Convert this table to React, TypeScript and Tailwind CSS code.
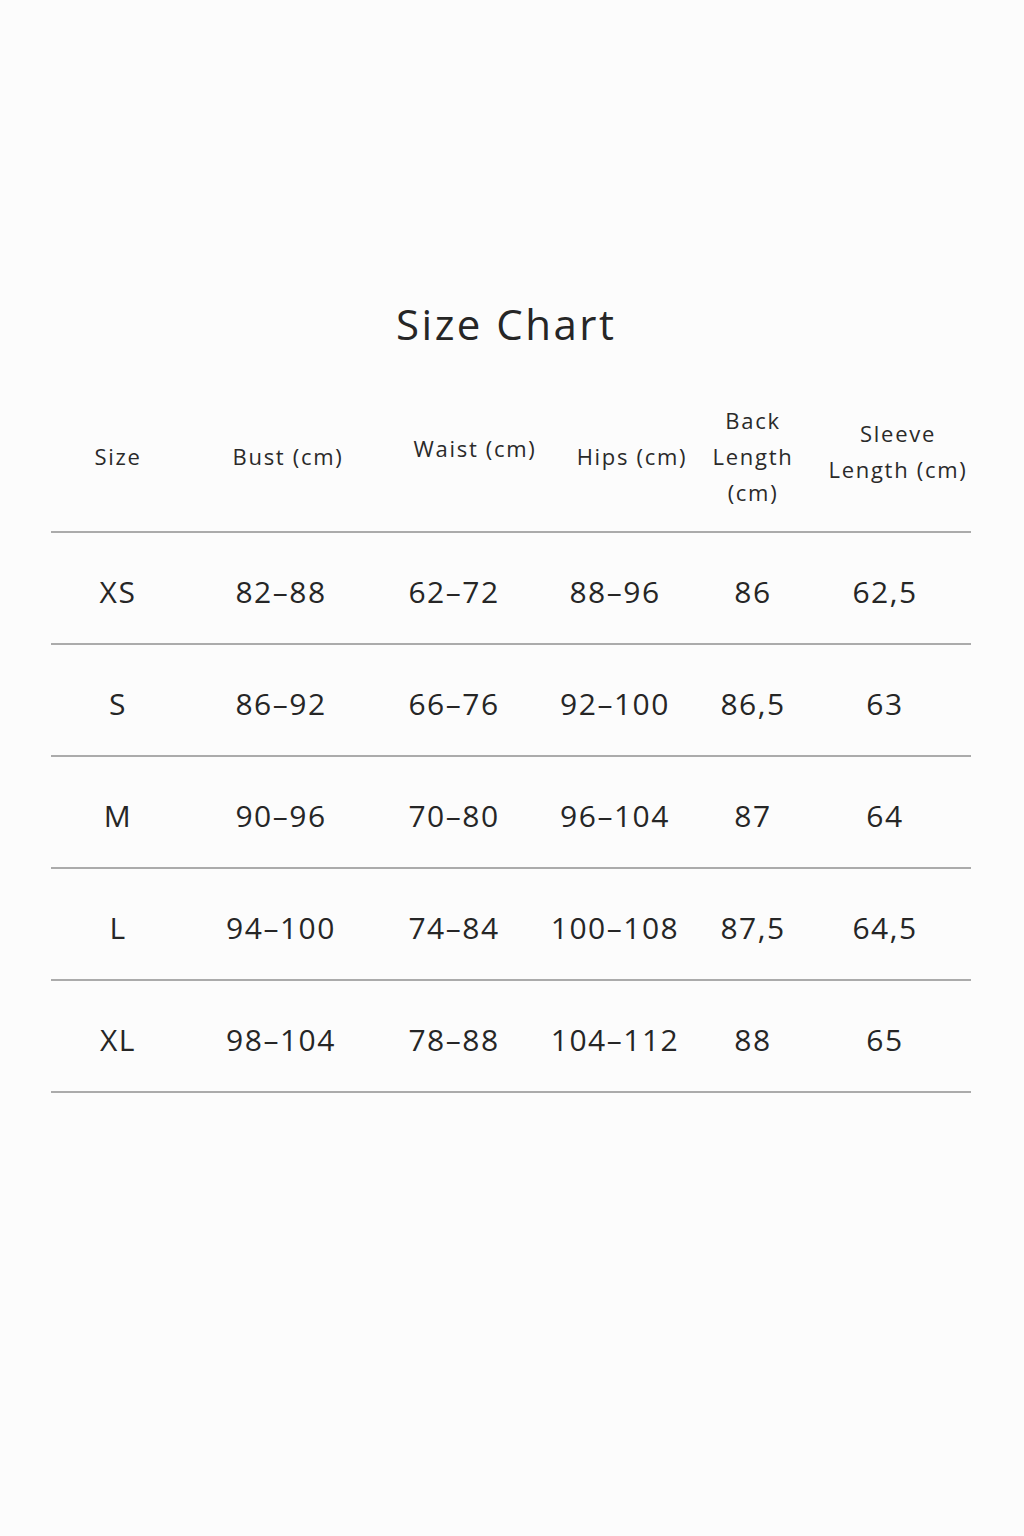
import React from "react";

const cols = ["w-[134px]", "w-[192px]", "w-[154px]", "w-[168px]", "w-[108px]", "w-[164px]"];

const rows = [
  ["XS", "82–88", "62–72", "88–96", "86", "62,5"],
  ["S", "86–92", "66–76", "92–100", "86,5", "63"],
  ["M", "90–96", "70–80", "96–104", "87", "64"],
  ["L", "94–100", "74–84", "100–108", "87,5", "64,5"],
  ["XL", "98–104", "78–88", "104–112", "88", "65"],
];

export default function App() {
  return (
    <div
      className="w-[1024px] h-[1536px] bg-[#fcfcfc] text-[#262626] flex flex-col"
      style={{ fontFamily: "'Open Sans', 'Noto Sans', sans-serif" }}
    >
      <div className="pt-[296px] pl-[396px]">
        <h1 className="text-[42px] leading-[56px] font-normal tracking-[2.5px]">Size Chart</h1>
      </div>
      <div className="ml-[51px] w-[920px] mt-[48px]">
        <div className="flex h-[131px] text-[22px] leading-[36px] text-[#2a2a2a] font-normal tracking-[1.7px]">
          <div className={`${cols[0]} flex items-center justify-center pb-[20px]`}>Size</div>
          <div className={`${cols[1]} flex items-center justify-center pb-[20px] pl-[14px]`}>Bust (cm)</div>
          <div className={`${cols[2]} flex items-center justify-center pb-[36px] pl-[42px] whitespace-nowrap`}>Waist (cm)</div>
          <div className={`${cols[3]} flex items-center justify-center pb-[20px] pl-[34px] whitespace-nowrap`}>Hips (cm)</div>
          <div className={`${cols[4]} flex items-center justify-center text-center pb-[20px]`}>
            <span>Back<br />Length<br />(cm)</span>
          </div>
          <div className={`${cols[5]} flex items-center justify-center text-center pb-[29px] pl-[18px] whitespace-nowrap`}>
            <span>Sleeve<br />Length (cm)</span>
          </div>
        </div>
        {rows.map((r, i) => (
          <div key={i} className="flex h-[112px] border-t-2 border-[#ababab] text-[30px] font-normal tracking-[1.5px] text-[#262626]">
            {r.map((c, j) => (
              <div
                key={j}
                className={`${cols[j]} flex items-center justify-center pt-[6px] ${j === 5 ? "pr-[8px]" : ""}`}
              >
                {c}
              </div>
            ))}
          </div>
        ))}
        <div className="border-t-2 border-[#ababab]" />
      </div>
    </div>
  );
}
